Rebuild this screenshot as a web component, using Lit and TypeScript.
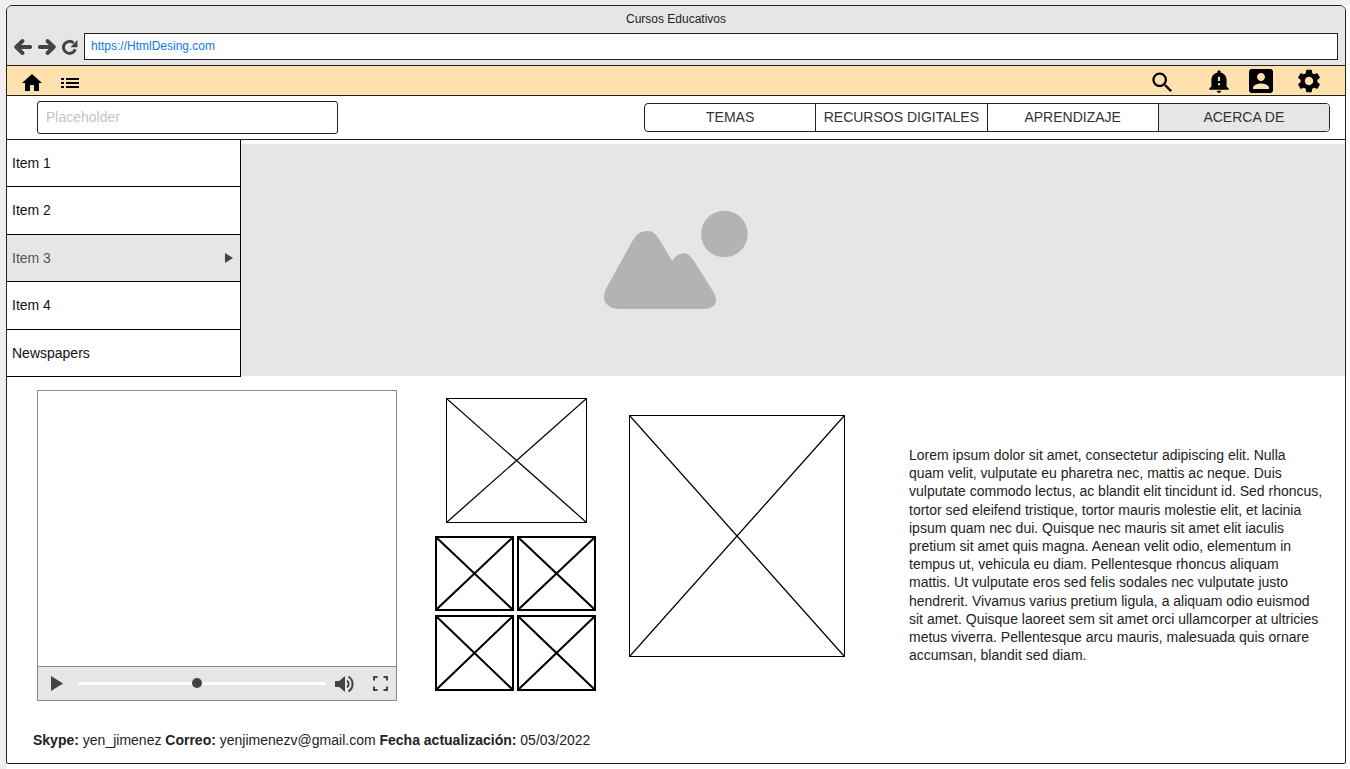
import { LitElement, html, css } from "lit";
import { customElement } from "lit/decorators.js";

const P = {
  home: "M10 20v-6h4v6h5v-8h3L12 3 2 12h3v8z",
  search: "M15.5 14h-.79l-.28-.27C15.41 12.59 16 11.11 16 9.5 16 5.91 13.09 3 9.5 3S3 5.91 3 9.5 5.91 16 9.5 16c1.61 0 3.09-.59 4.23-1.57l.27.28v.79l5 4.99L20.49 19l-4.99-5zm-6 0C7.01 14 5 11.99 5 9.5S7.01 5 9.5 5 14 7.01 14 9.5 11.99 14 9.5 14z",
  bell: "M12 23c1.1 0 1.99-.89 1.99-1.99h-3.98c0 1.1.89 1.99 1.99 1.99zm7-6v-6c0-3.35-2.36-6.15-5.5-6.83V3.5C13.5 2.67 12.83 2 12 2s-1.5.67-1.5 1.5v.67C7.36 4.85 5 7.65 5 11v6l-2 2v1h18v-1l-2-2zm-6-1h-2v-2h2v2zm0-4h-2V8h2v4z",
  account: "M3 5v14c0 1.1.89 2 2 2h14c1.1 0 2-.9 2-2V5c0-1.1-.9-2-2-2H5c-1.11 0-2 .9-2 2zm12 4c0 1.66-1.34 3-3 3s-3-1.34-3-3 1.34-3 3-3 3 1.34 3 3zm-9 8c0-2 4-3.1 6-3.1s6 1.1 6 3.1v1H6v-1z",
  gear: "M19.14 12.94c.04-.3.06-.61.06-.94 0-.32-.02-.64-.07-.94l2.03-1.58c.18-.14.23-.41.12-.61l-1.92-3.32c-.12-.22-.37-.29-.59-.22l-2.39.96c-.5-.38-1.03-.7-1.62-.94l-.36-2.54c-.04-.24-.24-.41-.48-.41h-3.84c-.24 0-.43.17-.47.41l-.36 2.54c-.59.24-1.13.57-1.62.94l-2.39-.96c-.22-.08-.47 0-.59.22L2.74 8.87c-.12.21-.08.47.12.61l2.03 1.58c-.05.3-.09.63-.09.94s.02.64.07.94l-2.03 1.58c-.18.14-.23.41-.12.61l1.92 3.32c.12.22.37.29.59.22l2.39-.96c.5.38 1.03.7 1.62.94l.36 2.54c.05.24.24.41.48.41h3.84c.24 0 .44-.17.47-.41l.36-2.54c.59-.24 1.13-.56 1.62-.94l2.39.96c.22.08.47 0 .59-.22l1.92-3.32c.12-.22.07-.47-.12-.61l-2.01-1.58zM12 15.6c-1.98 0-3.6-1.62-3.6-3.6s1.62-3.6 3.6-3.6 3.6 1.62 3.6 3.6-1.62 3.6-3.6 3.6z",
};

const icon = (d: string, cls: string) => html`<svg class=${cls} viewBox="0 0 24 24"><path d=${d} fill-rule="evenodd"></path></svg>`;

const crossed = (cls: string) => html`<div class="ph ${cls}"><svg viewBox="0 0 100 100" preserveAspectRatio="none">
  <line x1="0" y1="0" x2="100" y2="100" vector-effect="non-scaling-stroke"></line>
  <line x1="100" y1="0" x2="0" y2="100" vector-effect="non-scaling-stroke"></line>
</svg></div>`;

const items = ["Item 1", "Item 2", "Item 3", "Item 4", "Newspapers"];
const tabs = ["TEMAS", "RECURSOS DIGITALES", "APRENDIZAJE", "ACERCA DE"];
const LOREM = "Lorem ipsum dolor sit amet, consectetur adipiscing elit. Nulla quam velit, vulputate eu pharetra nec, mattis ac neque. Duis vulputate commodo lectus, ac blandit elit tincidunt id. Sed rhoncus, tortor sed eleifend tristique, tortor mauris molestie elit, et lacinia ipsum quam nec dui. Quisque nec mauris sit amet elit iaculis pretium sit amet quis magna. Aenean velit odio, elementum in tempus ut, vehicula eu diam. Pellentesque rhoncus aliquam mattis. Ut vulputate eros sed felis sodales nec vulputate justo hendrerit. Vivamus varius pretium ligula, a aliquam odio euismod sit amet. Quisque laoreet sem sit amet orci ullamcorper at ultricies metus viverra. Pellentesque arcu mauris, malesuada quis ornare accumsan, blandit sed diam.";

@customElement("app-root")
export class AppRoot extends LitElement {
  static styles = css`
    :host { display: block; width: 1350px; height: 769px; box-sizing: border-box; border-left: 6px solid #efefef; border-top: 5px solid #efefef; background: #fff; font-family: "Liberation Sans", Arial, sans-serif; color: #222; overflow: hidden; }
    * { box-sizing: border-box; }
    svg { display: block; flex: none; }
    .frame { width: 1340px; height: 759px; border: 1px solid #222; border-radius: 6px 6px 2px 2px; background: #fff; overflow: hidden; }
    .chrome { height: 59px; background: #e6e6e6; display: flex; flex-direction: column; }
    .title { font-size: 12px; line-height: 14px; text-align: center; padding-top: 6px; height: 27px; color: #222; }
    .nav { display: flex; align-items: center; padding: 0 7px 0 7px; height: 27px; }
    .a1, .a2 { width: 18px; height: 16px; fill: none; stroke: #444; stroke-width: 3.8; stroke-linejoin: round; stroke-linecap: round; }
    .a2 { margin-left: 6px; }
    .a3 { width: 17px; height: 16px; margin-left: 5px; }
    .a3 .arc { fill: none; stroke: #444; stroke-width: 3; }
    .a3 .tip { fill: #444; }
    .url { flex: 1; margin-left: 6px; height: 27px; border: 1px solid #222; background: #fff; color: #0a7bf5; font-size: 12px; line-height: 25px; padding-left: 6px; }
    .tools { display: flex; align-items: center; height: 31px; background: #ffe1ad; border-top: 1px solid #222; border-bottom: 1px solid #222; padding: 0 22px 0 13px; }
    .tools svg { fill: #000; }
    .i-home { width: 24px; height: 24px; margin-top: 5px; }
    .i-list { width: 20px; height: 12px; margin: 5px 0 0 16px; }
    .spacer { flex: 1; }
    .i-search { width: 27px; height: 27px; margin-top: 3px; }
    .i-bell { width: 26px; height: 26px; margin-left: 30px; }
    .i-account { width: 32px; height: 32px; margin-left: 13px; }
    .i-gear { width: 28px; height: 28px; margin: 1px 0 0 18px; }
    .bar { height: 44px; border-bottom: 1px solid #222; display: flex; align-items: flex-start; padding: 5px 15px 0 30px; }
    .search { width: 301px; height: 33px; border: 1px solid #222; border-radius: 3px; color: #c4c4c4; font-size: 14px; line-height: 31px; padding-left: 8px; }
    .tabs { margin-left: auto; margin-top: 2px; display: flex; width: 686px; height: 29px; border: 1px solid #222; border-radius: 4px; overflow: hidden; }
    .tab { flex: 1; text-align: center; font-size: 14px; line-height: 27px; color: #333; border-left: 1px solid #222; white-space: nowrap; }
    .tab:first-child { border-left: 0; }
    .tab:last-child { background: #e6e6e6; }
    .hero-wrap { position: relative; padding-top: 4px; }
    .hero { height: 232px; background: #e6e6e6; display: flex; align-items: center; justify-content: center; }
    .hero svg { width: 170px; height: 120px; fill: #b3b3b3; margin-left: -2px; }
    .side { position: absolute; top: 0; left: 0; width: 234px; border-right: 1px solid #000; background: #fff; }
    .item { height: 47.4px; border-bottom: 1px solid #000; display: flex; align-items: center; justify-content: space-between; padding: 0 7px 0.3px 5px; font-size: 14px; color: #111; }
    .item.on { background: #e6e6e6; color: #555; }
    .item svg { width: 8px; height: 10px; fill: #444; }
    .content { display: flex; align-items: flex-start; padding: 14px 0 0 30px; }
    .video { width: 360px; height: 311px; border: 1px solid #888; display: flex; flex-direction: column; }
    .screen { flex: 1; background: #fff; }
    .controls { height: 34px; background: #e6e6e6; border-top: 1px solid #888; display: flex; align-items: center; padding: 0 8px 0 13px; }
    .play { width: 12px; height: 15px; fill: #444; }
    .track { width: 249px; height: 3px; margin-left: 15px; background: #fff; position: relative; border-radius: 2px; }
    .knob { position: absolute; left: 114px; top: -4px; width: 10px; height: 10px; border-radius: 50%; background: #444; }
    .vol { width: 20px; height: 20px; margin-left: 8px; }
    .full { width: 15px; height: 15px; margin-left: 19px; }
    .thumbs { width: 161px; margin: 8px 0 0 38px; display: flex; flex-direction: column; align-items: center; gap: 13px; }
    .grid { display: grid; grid-template-columns: 79px 79px; grid-template-rows: 75px 76px; gap: 4px 3px; }
    .ph { background: #fff; }
    .ph svg { width: 100%; height: 100%; }
    .ph line { stroke: #000; }
    .ph.thin { border: 1px solid #000; }
    .ph.thin line { stroke-width: 1.3; }
    .ph.thick { border: 2px solid #000; }
    .ph.thick line { stroke-width: 2; }
    .t1 { width: 141px; height: 125px; margin-left: 1px; }
    .big { width: 216px; height: 242px; margin: 25px 0 0 33px; flex: none; }
    .lorem { width: 414px; margin: 56px 0 0 64px; font-size: 14px; line-height: 18.2px; color: #222; }
    .foot { padding: 31px 0 0 26px; font-size: 14px; line-height: 16px; color: #222; }
  `;

  render() {
    return html`<div class="frame">
      <div class="chrome">
        <div class="title">Cursos Educativos</div>
        <div class="nav">
          <svg class="a1" viewBox="0 0 18 16"><path d="M8.5 2 2.2 8l6.3 6M3 8h13.2"></path></svg>
          <svg class="a2" viewBox="0 0 18 16"><path d="M9.5 2 15.8 8l-6.3 6M15 8H1.8"></path></svg>
          <svg class="a3" viewBox="0 0 17 16">
            <path class="arc" d="M14.2 10.2A6 6 0 1 1 12.6 4"></path>
            <path class="tip" d="M16.5 1v7.2H9.3z"></path>
          </svg>
          <div class="url">https://HtmlDesing.com</div>
        </div>
      </div>
      <div class="tools">
        ${icon(P.home, "i-home")}
        <svg class="i-list" viewBox="0 0 20 12">
          <rect x="1" y="1" width="3" height="2"></rect><rect x="6" y="1" width="13" height="2"></rect>
          <rect x="1" y="5" width="3" height="2"></rect><rect x="6" y="5" width="13" height="2"></rect>
          <rect x="1" y="9" width="3" height="2"></rect><rect x="6" y="9" width="13" height="2"></rect>
        </svg>
        <div class="spacer"></div>
        ${icon(P.search, "i-search")}
        ${icon(P.bell, "i-bell")}
        ${icon(P.account, "i-account")}
        ${icon(P.gear, "i-gear")}
      </div>
      <div class="bar">
        <div class="search">Placeholder</div>
        <div class="tabs">${tabs.map((t) => html`<div class="tab">${t}</div>`)}</div>
      </div>
      <div class="hero-wrap">
        <div class="hero">
          <svg viewBox="0 0 510 360">
            <circle cx="403" cy="102" r="70"></circle>
            <path d="M172 93C195 93 205 112 218 135L247 183C256 168 268 160 281 160 297 160 306 174 316 190L368 272C376 285 378 292 378 300 378 318 362 327 340 327H90C62 327 42 313 42 290 42 278 48 266 56 252L126 125C138 104 150 93 172 93Z"></path>
          </svg>
        </div>
        <div class="side">
          ${items.map((t, i) => html`<div class="item ${i === 2 ? "on" : ""}">
            <span>${t}</span>
            ${i === 2 ? html`<svg viewBox="0 0 8 10"><path d="M0 0 8 5 0 10z"></path></svg>` : ""}
          </div>`)}
        </div>
      </div>
      <div class="content">
        <div class="video">
          <div class="screen"></div>
          <div class="controls">
            <svg class="play" viewBox="0 0 12 15"><path d="M0 0 12 7.5 0 15z"></path></svg>
            <div class="track"><div class="knob"></div></div>
            <svg class="vol" viewBox="0 0 20 20" fill="none" stroke="#444">
              <path d="M1 7h4l6-5v16l-6-5H1z" fill="#444" stroke="none"></path>
              <path d="M13 6.5a4.5 4.5 0 0 1 0 7" stroke-width="2"></path>
              <path d="M14.5 2.5a9 9 0 0 1 0 15" stroke-width="2"></path>
            </svg>
            <svg class="full" viewBox="0 0 15 15" fill="none" stroke="#444" stroke-width="2">
              <path d="M1 4.5V1h3.5M10.5 1H14v3.5M14 10.5V14h-3.5M4.5 14H1v-3.5"></path>
            </svg>
          </div>
        </div>
        <div class="thumbs">
          ${crossed("thin t1")}
          <div class="grid">
            ${crossed("thick")}${crossed("thick")}${crossed("thick")}${crossed("thick")}
          </div>
        </div>
        ${crossed("thin big")}
        <div class="lorem">${LOREM}</div>
      </div>
      <div class="foot"><b>Skype:</b> yen_jimenez <b>Correo:</b> yenjimenezv@gmail.com <b>Fecha actualización:</b> 05/03/2022</div>
    </div>`;
  }
}
